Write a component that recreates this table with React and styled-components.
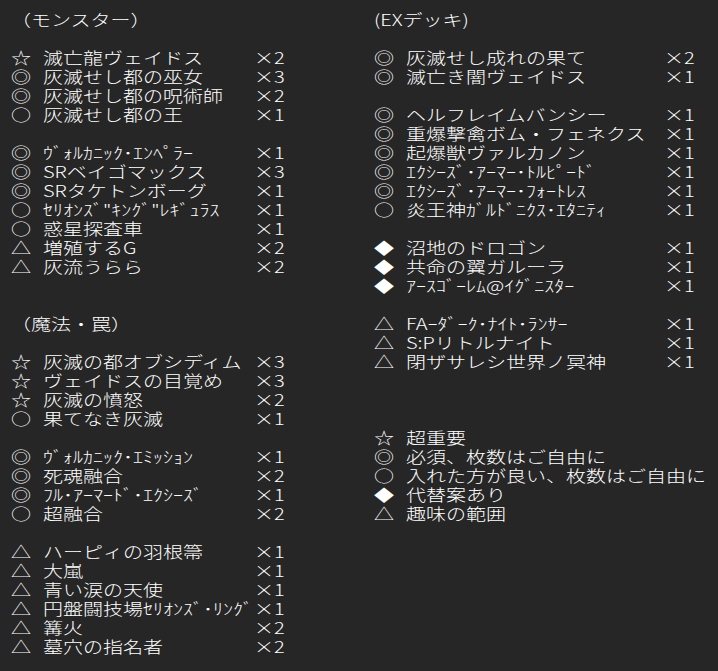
import React from "react";
import styled, { createGlobalStyle } from "styled-components";

const GlobalStyle = createGlobalStyle`
  html, body {
    margin: 0;
    padding: 0;
    background: #262626;
  }
`;

const Page = styled.div`
  display: flex;
  min-height: 100vh;
  padding-top: 10px;
  box-sizing: border-box;
  background: #262626;
  color: #ffffff;
  font-family: "Noto Sans CJK JP", "Noto Sans", sans-serif;
  font-size: 16px;
  font-weight: 300;
`;

const Column = styled.div`
  display: flex;
  flex-direction: column;
  width: ${(props) => props.width}px;
  padding-left: ${(props) => props.left}px;
`;

const Line = styled.div`
  display: grid;
  grid-template-columns: 32px ${(props) => props.countAt - 32}px auto;
  justify-items: start;
  height: 19px;
  line-height: 19px;
  white-space: pre;
`;

// 半角 10px / 全角 20px のマス目に合わせて横に引き伸ばす
const Glyphs = styled.span`
  display: inline-block;
  transform: scaleX(1.25);
  transform-origin: left center;
`;

const monsters = [
  { title: "（モンスター）" },
  null,
  ["☆", "滅亡龍ヴェイドス", "×2"],
  ["◎", "灰滅せし都の巫女", "×3"],
  ["◎", "灰滅せし都の呪術師", "×2"],
  ["○", "灰滅せし都の王", "×1"],
  null,
  ["◎", "ｳﾞｫﾙｶﾆｯｸ･ｴﾝﾍﾟﾗｰ", "×1"],
  ["◎", "SRベイゴマックス", "×3"],
  ["◎", "SRタケトンボーグ", "×1"],
  ["○", 'ｾﾘｵﾝｽﾞ"ｷﾝｸﾞ"ﾚｷﾞｭﾗｽ', "×1"],
  ["○", "惑星探査車", "×1"],
  ["△", "増殖するG", "×2"],
  ["△", "灰流うらら", "×2"],
  null,
  null,
  { title: "（魔法・罠）" },
  null,
  ["☆", "灰滅の都オブシディム", "×3"],
  ["☆", "ヴェイドスの目覚め", "×3"],
  ["☆", "灰滅の憤怒", "×2"],
  ["○", "果てなき灰滅", "×1"],
  null,
  ["◎", "ｳﾞｫﾙｶﾆｯｸ･ｴﾐｯｼｮﾝ", "×1"],
  ["◎", "死魂融合", "×2"],
  ["◎", "ﾌﾙ･ｱｰﾏｰﾄﾞ･ｴｸｼｰｽﾞ", "×1"],
  ["○", "超融合", "×2"],
  null,
  ["△", "ハーピィの羽根箒", "×1"],
  ["△", "大嵐", "×1"],
  ["△", "青い涙の天使", "×1"],
  ["△", "円盤闘技場ｾﾘｵﾝｽﾞ･ﾘﾝｸﾞ", "×1"],
  ["△", "篝火", "×2"],
  ["△", "墓穴の指名者", "×2"],
];

const extra = [
  { title: "(EXデッキ)" },
  null,
  ["◎", "灰滅せし成れの果て", "×2"],
  ["◎", "滅亡き闇ヴェイドス", "×1"],
  null,
  ["◎", "ヘルフレイムバンシー", "×1"],
  ["◎", "重爆撃禽ボム・フェネクス", "×1"],
  ["◎", "起爆獣ヴァルカノン", "×1"],
  ["◎", "ｴｸｼｰｽﾞ･ｱｰﾏｰ･ﾄﾙﾋﾟｰﾄﾞ", "×1"],
  ["◎", "ｴｸｼｰｽﾞ･ｱｰﾏｰ･ﾌｫｰﾄﾚｽ", "×1"],
  ["○", "炎王神ｶﾞﾙﾄﾞﾆｸｽ･ｴﾀﾆﾃｨ", "×1"],
  null,
  ["◆", "沼地のドロゴン", "×1"],
  ["◆", "共命の翼ガルーラ", "×1"],
  ["◆", "ｱｰｽｺﾞｰﾚﾑ@ｲｸﾞﾆｽﾀｰ", "×1"],
  null,
  ["△", "FAｰﾀﾞｰｸ･ﾅｲﾄ･ﾗﾝｻｰ", "×1"],
  ["△", "S:Pリトルナイト", "×1"],
  ["△", "閉ザサレシ世界ノ冥神", "×1"],
  null,
  null,
  null,
  ["☆", "超重要", ""],
  ["◎", "必須、枚数はご自由に", ""],
  ["○", "入れた方が良い、枚数はご自由に", ""],
  ["◆", "代替案あり", ""],
  ["△", "趣味の範囲", ""],
];

const List = ({ lines, countAt }) =>
  lines.map((line, i) => {
    if (!line) return <Line key={i} countAt={countAt} />;
    if (line.title)
      return (
        <Line key={i} countAt={countAt}>
          <Glyphs>{line.title}</Glyphs>
        </Line>
      );
    const [mark, name, count] = line;
    return (
      <Line key={i} countAt={countAt}>
        <Glyphs>{mark}</Glyphs>
        <Glyphs>{name}</Glyphs>
        <Glyphs>{count}</Glyphs>
      </Line>
    );
  });

export default function App() {
  return (
    <>
      <GlobalStyle />
      <Page>
        <Column left={11} width={363}>
          <List lines={monsters} countAt={243} />
        </Column>
        <Column left={0} width={344}>
          <List lines={extra} countAt={290} />
        </Column>
      </Page>
    </>
  );
}
